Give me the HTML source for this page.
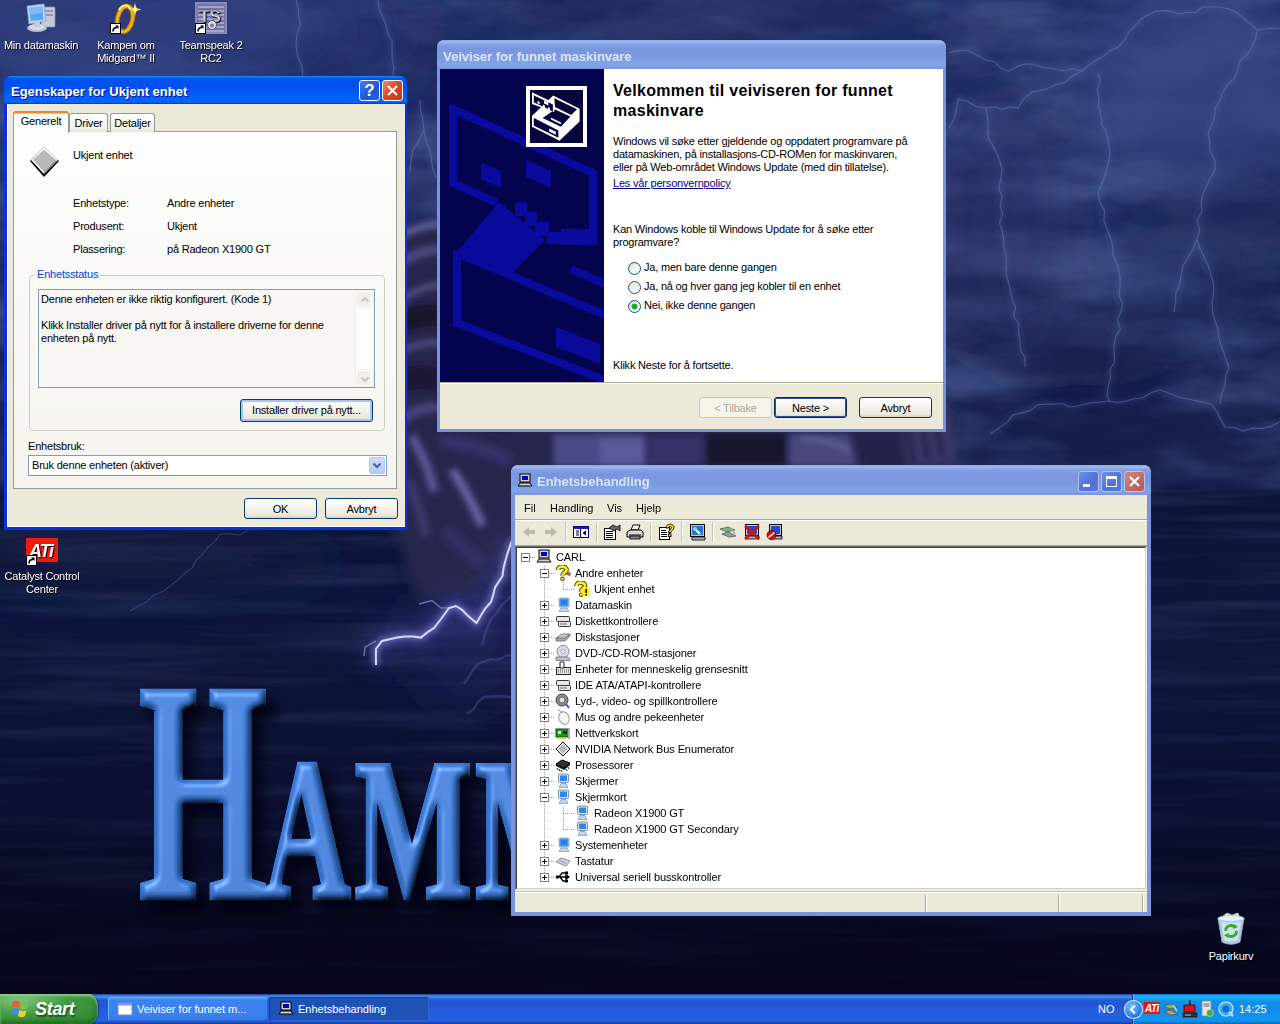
<!DOCTYPE html>
<html lang="no">
<head>
<meta charset="utf-8">
<title>Skrivebord</title>
<style>
*{box-sizing:border-box;margin:0;padding:0}
html,body{width:1280px;height:1024px;overflow:hidden;background:#0a0a28}
body{position:relative;font-family:"Liberation Sans",sans-serif;font-size:11px;color:#000;line-height:13px}
.abs{position:absolute}
#wall{position:absolute;left:0;top:0;width:1280px;height:1024px;overflow:hidden;
 background:linear-gradient(180deg,#1f2c63 0px,#202d64 150px,#1c2759 260px,#182150 350px,#161e49 478px,#0d1438 500px,#0f163b 650px,#0b0f31 800px,#070922 900px,#05061b 1000px)}
/* desktop icons */
.dicon{position:absolute;width:110px;text-align:center;color:#fff;font-size:11px;line-height:13px;text-shadow:1px 1px 1px #000;letter-spacing:-0.2px}
.dicon .lbl{display:block}
/* windows */
.win{position:absolute;background:#ece9d8}
.tb{position:absolute;left:0;top:0;right:0;color:#fff;font-weight:bold;font-size:13px;white-space:nowrap}
.btn{position:absolute;height:23px;border:1px solid #003c74;border-radius:3px;background:linear-gradient(180deg,#fff 0%,#f4f3ee 45%,#ebe8dc 85%,#d6d0c5 100%);text-align:center;line-height:20px;font-size:11px;letter-spacing:-0.2px}
.dlg{letter-spacing:-0.2px}

.tb.act{background:linear-gradient(180deg,#0997ff,#0053ee 8%,#0050ee 40%,#0066ff 88%,#0066ff 93%,#005bff 95%,#003dd7 96%,#003dd7)}
.tb.ina{background:linear-gradient(180deg,#8ea9e8 0,#9db9ee 7%,#82a2e4 16%,#7a96df 30%,#7b99e1 60%,#82a5e8 85%,#7d9de3 94%,#7a93df 100%);color:#d8e4f8}
.cb{position:absolute;width:21px;height:21px;border:1px solid #fff;border-radius:3px;color:#fff;text-align:center;overflow:hidden}
.cb svg{position:absolute;left:-1px;top:-1px}
.cb.help{background:linear-gradient(135deg,#3f7cf0,#1f55d8 60%,#2a62e0);font-size:17px;line-height:19px;font-weight:bold}
.cb.close{background:linear-gradient(135deg,#ee8e6c,#d8452a 50%,#c2351c)}
.ina .cb{border-color:#b4c3ee}
.ina .cb.min,.ina .cb.max{background:linear-gradient(135deg,#6f8fe6,#4f70d8 60%,#5a7be0)}
.ina .cb.close{background:linear-gradient(135deg,#d08a86,#c26660 60%,#b95b58)}
.tab{border:1px solid #919b9c;border-bottom:none;border-radius:3px 3px 0 0;background:linear-gradient(180deg,#fff,#f1f0ea 80%,#e6e4d9);text-align:center;line-height:18px}
.tab.sel{background:#fcfcfa;border-top:2px solid #ffc73c;border-radius:3px 3px 0 0;line-height:17px;border-top-color:#e68b2c;box-shadow:inset 0 1px 0 #ffc73c;height:22px!important}
.btn.def{box-shadow:inset 0 0 0 2px #a6c3f3;}
.sba{width:16px;height:16px;border:1px solid #fff;border-radius:2px;background:#f1f0e8;box-shadow:0 0 0 1px #f0efe8}

.radio{width:13px;height:13px;border-radius:50%;border:1px solid #1d5281;background:linear-gradient(135deg,#dcdcd4 0%,#f4f4f0 50%,#fff 100%)}
.radio.on::after{content:"";position:absolute;left:3px;top:3px;width:5px;height:5px;border-radius:50%;background:#21a121;box-shadow:0 0 0 0.5px #3fc43f}
.btn.dis{color:#aca899;border-color:#c9c7ba;background:#f5f4ea}

.vdot{width:1px;background:repeating-linear-gradient(180deg,#a0a0a0 0 1px,transparent 1px 2px)}
.hdot{height:1px;background:repeating-linear-gradient(90deg,#a0a0a0 0 1px,transparent 1px 2px)}
.tsep{top:0px;width:2px;height:20px;border-left:1px solid #c5c2b8;border-right:1px solid #fff}
.ssep{top:3px;width:2px;height:17px;border-left:1px solid #aca899;border-right:1px solid #fff}

.sc{left:0;bottom:0}

.tkb{border-radius:3px;color:#fff;white-space:nowrap}
</style>
</head>
<body>
<div id="wall">
<!--WALLSTART-->
<svg class="abs" style="left:0;top:0" width="1280" height="1024" viewBox="0 0 1280 1024">
<defs>
 <filter id="b30" x="-50%" y="-50%" width="200%" height="200%"><feGaussianBlur stdDeviation="30"/></filter>
 <filter id="b14" x="-50%" y="-50%" width="200%" height="200%"><feGaussianBlur stdDeviation="14"/></filter>
 <filter id="b6" x="-50%" y="-50%" width="200%" height="200%"><feGaussianBlur stdDeviation="6"/></filter>
 <filter id="b3" x="-20%" y="-20%" width="140%" height="140%"><feGaussianBlur stdDeviation="3"/></filter>
 <filter id="b1" x="-20%" y="-20%" width="140%" height="140%"><feGaussianBlur stdDeviation="0.7"/></filter>
 <filter id="cd" x="0" y="0" width="100%" height="100%"><feTurbulence type="fractalNoise" baseFrequency="0.006 0.02" numOctaves="4" seed="3"/><feColorMatrix type="matrix" values="0 0 0 0 0.05  0 0 0 0 0.08  0 0 0 0 0.24  2.6 0 0 0 -1.05"/></filter>
 <filter id="cw" x="0" y="0" width="100%" height="100%"><feTurbulence type="fractalNoise" baseFrequency="0.007 0.022" numOctaves="4" seed="21"/><feColorMatrix type="matrix" values="0 0 0 0 0.22  0 0 0 0 0.29  0 0 0 0 0.55  0 2.4 0 0 -1.0"/></filter>
 <filter id="sea" x="0" y="0" width="100%" height="100%"><feTurbulence type="fractalNoise" baseFrequency="0.004 0.07" numOctaves="3" seed="8"/><feColorMatrix type="matrix" values="0 0 0 0 0.09  0 0 0 0 0.12  0 0 0 0 0.30  2.2 0 0 0 -0.95"/></filter>
 <filter id="bev" x="-5%" y="-5%" width="110%" height="110%"><feGaussianBlur in="SourceAlpha" stdDeviation="3.5" result="blur"/><feSpecularLighting in="blur" surfaceScale="7" specularConstant="0.9" specularExponent="18" lighting-color="#a8d0ff" result="spec"><feDistantLight azimuth="235" elevation="42"/></feSpecularLighting><feComposite in="spec" in2="SourceAlpha" operator="in" result="specIn"/><feDiffuseLighting in="blur" surfaceScale="7" diffuseConstant="1" lighting-color="#ffffff" result="dif"><feDistantLight azimuth="235" elevation="55"/></feDiffuseLighting><feComposite in="SourceGraphic" in2="dif" operator="arithmetic" k1="1.08" k2="0" k3="0" k4="0" result="shaded"/><feComposite in="shaded" in2="SourceAlpha" operator="in" result="sh2"/><feComposite in="sh2" in2="specIn" operator="arithmetic" k1="0" k2="1" k3="0.6" k4="0"/></filter>
 <linearGradient id="hf" x1="0" y1="0" x2="0" y2="1"><stop offset="0" stop-color="#4486e4"/><stop offset=".5" stop-color="#3e7edc"/><stop offset="1" stop-color="#3876d4"/></linearGradient>
 <linearGradient id="seaf" x1="0" y1="0" x2="0" y2="1"><stop offset="0" stop-color="#fff"/><stop offset=".6" stop-color="#fff" stop-opacity=".6"/><stop offset="1" stop-color="#fff" stop-opacity=".15"/></linearGradient>
 <linearGradient id="skyf" x1="0" y1="0" x2="0" y2="1"><stop offset="0" stop-color="#fff"/><stop offset=".55" stop-color="#fff" stop-opacity=".8"/><stop offset="1" stop-color="#fff" stop-opacity=".15"/></linearGradient>
 <mask id="skym"><rect x="0" y="0" width="1280" height="490" fill="url(#skyf)"/></mask>
 <mask id="seam"><rect x="0" y="490" width="1280" height="510" fill="url(#seaf)"/></mask>
</defs>
<rect width="1280" height="490" filter="url(#cd)" opacity=".8"/>
<g mask="url(#skym)"><rect width="1280" height="490" filter="url(#cw)" opacity=".32"/></g>
<g mask="url(#seam)"><rect y="490" width="1280" height="510" filter="url(#sea)" opacity=".3"/></g>
<!-- cloud patches -->
<g filter="url(#b30)">
 <ellipse cx="1060" cy="115" rx="90" ry="20" fill="#18214f" opacity=".4"/>
 <ellipse cx="1250" cy="215" rx="80" ry="35" fill="#172052" opacity=".5"/>
 <ellipse cx="1080" cy="360" rx="90" ry="28" fill="#141b45" opacity=".5"/>
 <ellipse cx="1200" cy="80" rx="120" ry="90" fill="#384a86" opacity=".75"/>
 <ellipse cx="1170" cy="290" rx="70" ry="35" fill="#2c3a70" opacity=".55"/>
 <ellipse cx="1000" cy="230" rx="60" ry="120" fill="#273469" opacity=".5"/>
 <ellipse cx="140" cy="30" rx="230" ry="60" fill="#2f4080" opacity=".8"/>
 <ellipse cx="370" cy="45" rx="75" ry="45" fill="#17225a" opacity=".6"/>
 <ellipse cx="700" cy="10" rx="260" ry="30" fill="#18224f" opacity=".55"/>
 <ellipse cx="470" cy="640" rx="60" ry="60" fill="#30327a" opacity=".4"/>
 <ellipse cx="150" cy="560" rx="200" ry="40" fill="#18214c" opacity=".5"/>
</g>
<!-- figure -->
<g filter="url(#b6)">
 <path d="M396 236c20-12 40-14 60-8l24 202 450-30 25 20-10 50-60 10H530l-10 60-40 50-60 10-30-80z" fill="#28254e"/>
 <path d="M480 240c100-40 300-40 430 20l30 150-460 20z" fill="#1d1b40"/>
</g>
<g filter="url(#b3)">
 <path d="M400 236c14-8 26-11 40-12" stroke="#7674ac" stroke-width="5" fill="none"/>
 <path d="M402 262c12-8 24-12 38-13" stroke="#4a4880" stroke-width="10" fill="none"/>
 <path d="M402 300c12-10 24-14 38-15" stroke="#5c5a94" stroke-width="5" fill="none"/>
 <path d="M402 322c12-6 24-8 38-6" stroke="#14122c" stroke-width="22" fill="none"/>
 <path d="M402 352c12-8 24-10 38-9" stroke="#504e88" stroke-width="6" fill="none"/>
 <path d="M402 380c12-4 24-4 38 0" stroke="#1a1834" stroke-width="24" fill="none"/>
 <path d="M402 420c12-10 24-14 38-12" stroke="#46447c" stroke-width="10" fill="none"/>
 <path d="M412 436c10 20 18 34 22 56" stroke="#5a5894" stroke-width="9" fill="none"/>
 <path d="M408 480c8 20 14 36 18 56" stroke="#3c3a70" stroke-width="9" fill="none"/>
 <path d="M452 470c12 18 22 36 30 56" stroke="#6664a2" stroke-width="9" fill="none"/>
 <path d="M440 440c20 4 50 8 70 22" stroke="#34326a" stroke-width="14" fill="none"/>
 <path d="M445 530l36 34" stroke="#302e62" stroke-width="16"/>
 <path d="M553 434h92v32h-92z" fill="#4a4886"/>
 <path d="M600 440h45v26h-45z" fill="#5c5a9a"/>
 <path d="M648 436h56v30h-56z" fill="#34326a"/>
 <path d="M706 434h80v32h-80z" fill="#14122e"/>
 <path d="M789 434h60l8 32h-68z" fill="#48467e"/>
 <path d="M800 438c20 0 40 6 50 14" stroke="#6a68a4" stroke-width="3" fill="none"/>
 <path d="M857 434h40l4 32h-40z" fill="#22204a"/>
 <path d="M900 410l48-8 8 60-48 6z" fill="#3a3868"/>
 <path d="M906 418l8 46M920 414l8 46M934 410l8 46" stroke="#17153a" stroke-width="4"/>
</g>
<!-- faint lightning -->
<path d="M1280 28 L1268.5 28.5 L1257.0 30.0 L1250.6 23.9 L1243.8 18.5 L1237.2 12.7 L1229.0 9.0 L1220.1 7.0 L1211.0 7.0 L1202.6 6.9 L1195.4 12.5 L1187.0 12.4 L1179.0 14.0 L1167.8 10.6 L1156.0 11.0 L1142.0 18.0 L1135.5 25.3 L1128.6 32.2 L1124.0 41.0 L1118.0 47.2 L1110.1 50.6 L1103.6 56.2 L1096.0 60.0 L1088.9 65.3 L1082.0 71.0 L1072.9 75.4 L1065.0 82.2 L1055.0 85.0 L1047.7 88.5 L1039.9 90.6 L1032.0 92.0 L1023.6 98.8 L1018.0 108.0 L1010.0 106.8 L1002.0 109.5 L994.0 106.7 L986.0 108.0 L976.2 106.5 L967.5 101.5 L958.0 99.0 L956.6 109.2 L954.1 119.0 L949.0 128.0 M1082 71 L1073.1 68.7 L1063.9 70.9 L1055.0 69.0 L1043.2 67.7 L1032.0 64.0 L1023.7 64.3 L1016.2 67.1 L1009.0 71.0 L1000.9 68.2 L994.5 61.8 L986.0 60.0 L976.6 54.8 L967.0 50.0 L957.9 50.7 L949.0 53.0 M1098 73 L1099.9 81.3 L1097.3 89.9 L1099.0 98.3 L1098.4 106.7 L1101.0 115.0 L1101.6 124.4 L1106.4 132.8 L1108.3 141.9 L1110.0 151.0 L1109.0 159.8 L1106.7 168.2 L1104.6 176.7 L1101.2 184.8 L1098.0 193.0 L1099.8 202.1 L1104.6 210.5 L1104.0 220.2 L1107.0 229.0 L1110.1 237.2 L1112.6 245.6 L1112.9 254.6 L1116.7 262.6 L1119.0 271.0 L1120.2 279.2 L1119.9 287.4 L1119.3 295.6 L1122.5 303.7 L1121.0 312.0 L1117.5 319.8 L1120.3 328.8 L1115.7 336.4 L1113.9 344.5 L1114.0 353.0 L1114.7 361.7 L1110.0 369.6 L1110.4 378.3 L1108.1 386.5 L1107.0 395.0 L1110.0 402.0 M1257 32 L1255.1 40.4 L1251.2 47.7 L1246.8 54.8 L1240.0 60.7 L1238.0 69.0 L1234.7 77.7 L1228.0 84.4 L1222.9 92.1 L1220.0 101.0 L1215.2 108.3 L1214.6 117.2 L1211.6 125.2 L1208.0 133.0 L1209.6 142.3 L1210.3 151.7 L1214.9 160.4 L1215.0 170.0 L1210.5 177.6 L1206.8 185.5 L1203.1 193.4 L1201.0 202.0 L1202.0 211.5 L1197.0 220.3 L1199.8 229.9 L1197.0 239.0 L1193.6 248.3 L1188.6 256.8 L1183.3 265.3 L1181.0 275.0 L1179.9 284.4 L1175.7 293.2 L1175.6 302.7 L1174.0 312.0 M986 108 L987.5 117.9 L988.1 127.9 L988.0 138.0 L992.8 145.4 L996.7 153.3 L999.9 161.4 L1002.0 170.0 L1000.7 179.0 L998.8 187.9 L1002.0 197.1 L1000.0 206.0 L1002.8 214.2 L999.5 223.0 L1002.3 231.2 L1003.6 239.6 L1004.0 248.0 L1006.4 256.8 L1006.1 266.1 L1006.3 275.2 L1009.0 284.0 L1010.8 292.0 L1012.5 299.9 L1015.6 307.6 L1013.5 316.4 L1018.9 323.6 L1018.5 332.0 L1020.0 340.0 L1020.2 349.3 L1024.9 357.7 L1025.0 367.0 M990 434 L998.3 428.5 L1006.6 422.9 L1013.0 415.0 L1021.4 412.8 L1029.9 410.7 L1037.2 405.1 L1046.0 404.0 L1054.0 404.2 L1062.1 403.5 L1069.9 407.0 L1078.0 406.0 L1089.3 403.1 L1101.0 402.0 L1109.0 401.0 L1117.2 402.7 L1125.1 401.3 L1133.0 399.0 L1142.7 398.0 L1150.9 392.8 L1160.0 390.0 L1169.3 393.0 L1178.4 397.0 L1188.0 399.0 L1199.5 401.4 L1211.0 404.0 L1216.5 411.2 L1220.7 419.1 L1225.0 427.0 L1234.3 427.5 L1243.0 431.0 L1252.1 428.2 L1262.0 428.6 L1271.2 426.2 L1280.0 422.0 M1197 239 L1200.0 248.2 L1204.0 257.0 L1208.2 265.7 L1211.0 275.0 L1213.6 284.0 L1213.6 293.3 L1212.2 302.7 L1212.6 311.9 L1215.0 321.0 L1217.9 328.5 L1218.5 336.7 L1220.8 344.4 L1223.5 351.9 L1226.0 359.5 L1229.0 367.0 L1225.6 376.0 L1225.1 385.6 L1221.4 394.5 L1220.0 404.0 M296 0 L298.3 8.2 L298.7 16.7 L300.0 25.0 L296.8 34.8 L296.0 45.0 L297.5 55.5 L301.6 65.5 L303.0 76.0 M378 0 L378.8 8.9 L382.7 16.9 L386.0 25.0 L387.7 33.4 L392.1 41.2 L392.0 50.0 L392.1 58.7 L393.8 67.3 L393.0 76.0 M420 100 L420.6 110.1 L422.8 120.0 L424.0 130.0 L425.7 140.4 L430.0 150.0 L431.4 159.5 L432.7 168.9 L436.0 178.0 M424 130 L419.1 140.3 L413.0 150.0 L410.9 160.9 L410.0 172.0" stroke="#6d80c0" stroke-width="3.5" fill="none" opacity=".28" filter="url(#b3)"/>
<path d="M1280 28 L1268.5 28.5 L1257.0 30.0 L1250.6 23.9 L1243.8 18.5 L1237.2 12.7 L1229.0 9.0 L1220.1 7.0 L1211.0 7.0 L1202.6 6.9 L1195.4 12.5 L1187.0 12.4 L1179.0 14.0 L1167.8 10.6 L1156.0 11.0 L1142.0 18.0 L1135.5 25.3 L1128.6 32.2 L1124.0 41.0 L1118.0 47.2 L1110.1 50.6 L1103.6 56.2 L1096.0 60.0 L1088.9 65.3 L1082.0 71.0 L1072.9 75.4 L1065.0 82.2 L1055.0 85.0 L1047.7 88.5 L1039.9 90.6 L1032.0 92.0 L1023.6 98.8 L1018.0 108.0 L1010.0 106.8 L1002.0 109.5 L994.0 106.7 L986.0 108.0 L976.2 106.5 L967.5 101.5 L958.0 99.0 L956.6 109.2 L954.1 119.0 L949.0 128.0 M1082 71 L1073.1 68.7 L1063.9 70.9 L1055.0 69.0 L1043.2 67.7 L1032.0 64.0 L1023.7 64.3 L1016.2 67.1 L1009.0 71.0 L1000.9 68.2 L994.5 61.8 L986.0 60.0 L976.6 54.8 L967.0 50.0 L957.9 50.7 L949.0 53.0 M1098 73 L1099.9 81.3 L1097.3 89.9 L1099.0 98.3 L1098.4 106.7 L1101.0 115.0 L1101.6 124.4 L1106.4 132.8 L1108.3 141.9 L1110.0 151.0 L1109.0 159.8 L1106.7 168.2 L1104.6 176.7 L1101.2 184.8 L1098.0 193.0 L1099.8 202.1 L1104.6 210.5 L1104.0 220.2 L1107.0 229.0 L1110.1 237.2 L1112.6 245.6 L1112.9 254.6 L1116.7 262.6 L1119.0 271.0 L1120.2 279.2 L1119.9 287.4 L1119.3 295.6 L1122.5 303.7 L1121.0 312.0 L1117.5 319.8 L1120.3 328.8 L1115.7 336.4 L1113.9 344.5 L1114.0 353.0 L1114.7 361.7 L1110.0 369.6 L1110.4 378.3 L1108.1 386.5 L1107.0 395.0 L1110.0 402.0 M1257 32 L1255.1 40.4 L1251.2 47.7 L1246.8 54.8 L1240.0 60.7 L1238.0 69.0 L1234.7 77.7 L1228.0 84.4 L1222.9 92.1 L1220.0 101.0 L1215.2 108.3 L1214.6 117.2 L1211.6 125.2 L1208.0 133.0 L1209.6 142.3 L1210.3 151.7 L1214.9 160.4 L1215.0 170.0 L1210.5 177.6 L1206.8 185.5 L1203.1 193.4 L1201.0 202.0 L1202.0 211.5 L1197.0 220.3 L1199.8 229.9 L1197.0 239.0 L1193.6 248.3 L1188.6 256.8 L1183.3 265.3 L1181.0 275.0 L1179.9 284.4 L1175.7 293.2 L1175.6 302.7 L1174.0 312.0 M986 108 L987.5 117.9 L988.1 127.9 L988.0 138.0 L992.8 145.4 L996.7 153.3 L999.9 161.4 L1002.0 170.0 L1000.7 179.0 L998.8 187.9 L1002.0 197.1 L1000.0 206.0 L1002.8 214.2 L999.5 223.0 L1002.3 231.2 L1003.6 239.6 L1004.0 248.0 L1006.4 256.8 L1006.1 266.1 L1006.3 275.2 L1009.0 284.0 L1010.8 292.0 L1012.5 299.9 L1015.6 307.6 L1013.5 316.4 L1018.9 323.6 L1018.5 332.0 L1020.0 340.0 L1020.2 349.3 L1024.9 357.7 L1025.0 367.0 M990 434 L998.3 428.5 L1006.6 422.9 L1013.0 415.0 L1021.4 412.8 L1029.9 410.7 L1037.2 405.1 L1046.0 404.0 L1054.0 404.2 L1062.1 403.5 L1069.9 407.0 L1078.0 406.0 L1089.3 403.1 L1101.0 402.0 L1109.0 401.0 L1117.2 402.7 L1125.1 401.3 L1133.0 399.0 L1142.7 398.0 L1150.9 392.8 L1160.0 390.0 L1169.3 393.0 L1178.4 397.0 L1188.0 399.0 L1199.5 401.4 L1211.0 404.0 L1216.5 411.2 L1220.7 419.1 L1225.0 427.0 L1234.3 427.5 L1243.0 431.0 L1252.1 428.2 L1262.0 428.6 L1271.2 426.2 L1280.0 422.0 M1197 239 L1200.0 248.2 L1204.0 257.0 L1208.2 265.7 L1211.0 275.0 L1213.6 284.0 L1213.6 293.3 L1212.2 302.7 L1212.6 311.9 L1215.0 321.0 L1217.9 328.5 L1218.5 336.7 L1220.8 344.4 L1223.5 351.9 L1226.0 359.5 L1229.0 367.0 L1225.6 376.0 L1225.1 385.6 L1221.4 394.5 L1220.0 404.0 M296 0 L298.3 8.2 L298.7 16.7 L300.0 25.0 L296.8 34.8 L296.0 45.0 L297.5 55.5 L301.6 65.5 L303.0 76.0 M378 0 L378.8 8.9 L382.7 16.9 L386.0 25.0 L387.7 33.4 L392.1 41.2 L392.0 50.0 L392.1 58.7 L393.8 67.3 L393.0 76.0 M420 100 L420.6 110.1 L422.8 120.0 L424.0 130.0 L425.7 140.4 L430.0 150.0 L431.4 159.5 L432.7 168.9 L436.0 178.0 M424 130 L419.1 140.3 L413.0 150.0 L410.9 160.9 L410.0 172.0" stroke="#6f83c2" stroke-width="1.2" fill="none" opacity=".42" filter="url(#b1)"/>
<path d="M262 520 L255.4 526.1 L247.5 530.2 L240.0 535.0 L230.0 533.9 L220.0 534.0 L215.2 541.4 L208.1 546.9 L203.0 554.0 L196.6 559.9 L192.3 567.8 L185.1 572.8 L179.0 579.0 L171.3 585.3 L163.3 591.2 L154.0 595.0 L146.8 601.6 L138.4 606.3 L130.0 611.0" stroke="#5a68a8" stroke-width="1.2" fill="none" opacity=".4" filter="url(#b1)"/>
<!-- bright lightning -->
<path d="M512 540 L508.0 552.0 L505.6 559.9 L503.6 567.8 L502.5 576.0 L495.0 587.5 L493.3 594.8 L491.0 602.0 L484.8 609.0 L480.0 617.0 L476.5 623.0 L467.0 615.0 L462.1 609.8 L456.0 606.0 L449.0 608.0 L441.0 619.0 L434.0 628.0 L427.2 632.4 L421.0 637.6 L413.0 636.5 L405.0 636.5 L397.0 637.6 L389.5 639.3 L382.0 641.0 L376.0 649.0 L375.9 657.0 L376.0 665.0" stroke="#5a5cc8" stroke-width="22" fill="none" opacity=".35" filter="url(#b14)"/>
<path d="M512 540 L508.0 552.0 L505.6 559.9 L503.6 567.8 L502.5 576.0 L495.0 587.5 L493.3 594.8 L491.0 602.0 L484.8 609.0 L480.0 617.0 L476.5 623.0 L467.0 615.0 L462.1 609.8 L456.0 606.0 L449.0 608.0 L441.0 619.0 L434.0 628.0 L427.2 632.4 L421.0 637.6 L413.0 636.5 L405.0 636.5 L397.0 637.6 L389.5 639.3 L382.0 641.0 L376.0 649.0 L375.9 657.0 L376.0 665.0" stroke="#8a8ae8" stroke-width="7" fill="none" opacity=".6" filter="url(#b3)"/>
<path d="M512 596 L506.0 601.1 L500.5 606.6 L496.3 613.3 L491.0 619.0 L487.5 627.5 L484.4 636.1 L482.0 645.0 M512 655 L505.0 656.1 L498.6 659.4 L491.4 659.3 L484.7 661.6 L478.0 663.6 L472.8 670.1 L468.6 677.3 L463.6 684.0 M512 697 L505.0 696.6 L498.0 696.2 L491.0 696.6 L484.0 697.0 L477.9 702.1 L473.7 709.1 L467.0 713.7" stroke="#6868b8" stroke-width="2.5" fill="none" opacity=".3" filter="url(#b1)"/>
<path d="M456 606 L448.6 607.8 L441.0 608.0 L432.0 600.5 L419.0 604.0 M376 641 L365.0 647.0 L364.0 656.0" stroke="#a0a0e0" stroke-width="1.5" fill="none" opacity=".6" filter="url(#b1)"/>
<path d="M512 540 L508.0 552.0 L505.6 559.9 L503.6 567.8 L502.5 576.0 L495.0 587.5 L493.3 594.8 L491.0 602.0 L484.8 609.0 L480.0 617.0 L476.5 623.0 L467.0 615.0 L462.1 609.8 L456.0 606.0 L449.0 608.0 L441.0 619.0 L434.0 628.0 L427.2 632.4 L421.0 637.6 L413.0 636.5 L405.0 636.5 L397.0 637.6 L389.5 639.3 L382.0 641.0 L376.0 649.0 L375.9 657.0 L376.0 665.0" stroke="#e0e0ff" stroke-width="2" fill="none" opacity=".95" filter="url(#b1)"/>
<!-- HAMM -->
<g font-family="Liberation Serif, serif" font-weight="bold" id="hamm">
 <g filter="url(#b6)" fill="#02020c" stroke="#02020c" stroke-width="8" opacity=".8" transform="translate(9 11)"><text x="203" y="897" text-anchor="middle" transform="translate(203 0) scale(.525 1) translate(-203 0)" font-size="313">H</text><text x="307" y="897" text-anchor="middle" transform="translate(307 0) scale(.60 1) translate(-307 0)" font-size="199">A</text><text x="413.5" y="897" text-anchor="middle" transform="translate(413.5 0) scale(.62 1) translate(-413.5 0)" font-size="199">M</text><text x="534" y="897" text-anchor="middle" transform="translate(534 0) scale(.62 1) translate(-534 0)" font-size="199">M</text></g>
 <g fill="url(#hf)" stroke="#3e7edc" stroke-width="7" stroke-linejoin="miter" filter="url(#bev)"><text x="203" y="897" text-anchor="middle" transform="translate(203 0) scale(.525 1) translate(-203 0)" font-size="313">H</text><text x="307" y="897" text-anchor="middle" transform="translate(307 0) scale(.60 1) translate(-307 0)" font-size="199">A</text><text x="413.5" y="897" text-anchor="middle" transform="translate(413.5 0) scale(.62 1) translate(-413.5 0)" font-size="199">M</text><text x="534" y="897" text-anchor="middle" transform="translate(534 0) scale(.62 1) translate(-534 0)" font-size="199">M</text></g>
</g>
</svg>
<!--WALLEND-->

</div>
<div class="dicon" style="left:-14px;top:2px">
 <svg width="34" height="32" viewBox="0 0 34 32" style="display:block;margin:0 auto"><rect x="17" y="5" width="14" height="20" rx="1" fill="#c4cad8" stroke="#8890a8" stroke-width=".8"/><rect x="19" y="8" width="10" height="2" fill="#9098b0"/><rect x="19" y="12" width="10" height="2" fill="#9098b0"/><path d="M3 4l17-2 2 17-17 3z" fill="#b8d4f4" stroke="#8aa8d0" stroke-width=".8"/><path d="M5 6l13-1.500 1.500 13L7 19z" fill="#5aa6f0"/><path d="M5 6l13-1.500.7 6L6 13z" fill="#7abaf8"/><ellipse cx="13" cy="26" rx="10" ry="4" fill="#b4bcd0"/><ellipse cx="13" cy="25" rx="8" ry="3" fill="#d4daea"/><path d="M10 20h6v5h-6z" fill="#c0c8dc"/></svg>
 <span class="lbl" style="margin-top:5px">Min datamaskin</span></div>
<div class="dicon" style="left:71px;top:2px">
 <div style="position:relative;width:32px;height:32px;margin:0 auto"><svg width="32" height="32" viewBox="0 0 32 32"><ellipse cx="15" cy="17" rx="7.500" ry="13" fill="none" stroke="#b87608" stroke-width="5" transform="rotate(12 15 17)"/><ellipse cx="15" cy="17" rx="7.500" ry="13" fill="none" stroke="#f0b818" stroke-width="2.500" transform="rotate(12 15 17)"/><path d="M9 8c3-6 9-6 11-1" stroke="#fff08a" stroke-width="2" fill="none"/><path d="M25 1l1.500 5 5 1.500-5 1.500-1.500 5-1.500-5-5-1.500 5-1.500z" fill="#ffd84a"/><circle cx="25" cy="7.500" r="2" fill="#fff8c8"/></svg><svg class="abs sc" width="11" height="11" viewBox="0 0 11 11"><rect width="11" height="11" fill="#fff"/><rect x=".5" y=".5" width="10" height="10" fill="#fff" stroke="#000" stroke-width="1"/><path d="M3 8.500c0-3 1.500-4 4-4" stroke="#000" stroke-width="1.600" fill="none"/><path d="M5 2.500h3.500V6z" fill="#000"/></svg></div>
 <span class="lbl" style="margin-top:5px">Kampen om<br>Midgard™ II</span></div>
<div class="dicon" style="left:156px;top:2px">
 <div style="position:relative;width:32px;height:32px;margin:0 auto"><svg width="32" height="32" viewBox="0 0 32 32"><rect width="32" height="32" fill="#8888b8"/><rect x="2" y="2" width="28" height="28" fill="#7474a8"/><path d="M3 5h26M3 9h26M3 13h26M3 17h26M3 21h26M3 25h26M3 29h26" stroke="#a4a4cc" stroke-width="2"/><text x="4" y="20" font-family="Liberation Sans, sans-serif" font-weight="bold" font-size="17" fill="#f4f4fc" stroke="#50507c" stroke-width=".3">TS</text><circle cx="17" cy="23" r="4.500" fill="#e0e0ec" stroke="#50507c"/><circle cx="17" cy="23.500" r="2" fill="#7474a8"/></svg><svg class="abs sc" width="11" height="11" viewBox="0 0 11 11"><rect width="11" height="11" fill="#fff"/><rect x=".5" y=".5" width="10" height="10" fill="#fff" stroke="#000" stroke-width="1"/><path d="M3 8.500c0-3 1.500-4 4-4" stroke="#000" stroke-width="1.600" fill="none"/><path d="M5 2.500h3.500V6z" fill="#000"/></svg></div>
 <span class="lbl" style="margin-top:5px">Teamspeak 2<br>RC2</span></div>
<div class="dicon" style="left:-13px;top:534px">
 <div style="position:relative;width:32px;height:32px;margin:0 auto"><svg width="32" height="32" viewBox="0 0 32 32"><rect x="0" y="4" width="32" height="24" fill="#ee1c0c"/><text x="3" y="23" font-family="Liberation Sans, sans-serif" font-weight="bold" font-style="italic" font-size="18" fill="#fff" letter-spacing="-1.200">ATi</text></svg><svg class="abs sc" width="11" height="11" viewBox="0 0 11 11"><rect width="11" height="11" fill="#fff"/><rect x=".5" y=".5" width="10" height="10" fill="#fff" stroke="#000" stroke-width="1"/><path d="M3 8.500c0-3 1.500-4 4-4" stroke="#000" stroke-width="1.600" fill="none"/><path d="M5 2.500h3.500V6z" fill="#000"/></svg></div>
 <span class="lbl" style="margin-top:4px">Catalyst Control<br>Center</span></div>
<div class="dicon" style="left:1176px;top:911px">
 <svg width="32" height="34" viewBox="0 0 32 34" style="display:block;margin:0 auto"><path d="M8 5l4-3 5 2 6-2 2 5z" fill="#f4f0d8" stroke="#c8c8b0" stroke-width=".6"/><path d="M3 7c8 3 18 3 26 0l-4 24c-6 3-12 3-18 0z" fill="#c4dcf0" fill-opacity=".9" stroke="#9ab8d8" stroke-width=".8"/><ellipse cx="16" cy="7.500" rx="13" ry="3" fill="#e4f0fa" stroke="#a8c4e0" stroke-width=".8"/><path d="M6 10c6 2 14 2 20 0l-3 19c-5 2-9 2-14 0z" fill="#dcecf8" fill-opacity=".7"/><circle cx="16" cy="20" r="5.500" fill="none" stroke="#2fb02f" stroke-width="3" stroke-dasharray="12 5"/><path d="M19 13l4 3-5 2zM13 27l-4-3 5-2z" fill="#2fb02f"/></svg>
 <span class="lbl" style="margin-top:5px">Papirkurv</span></div>

<div class="win" id="w1" style="left:4px;top:76px;width:403px;height:454px;background:#0831d9;border-radius:7px 7px 0 0">
 <div class="tb act" style="height:28px;border-radius:7px 7px 0 0"><span class="abs" style="left:7px;top:8px;line-height:16px;text-shadow:1px 1px 0 #0f1089">Egenskaper for Ukjent enhet</span>
  <div class="cb help" style="left:355px;top:4px">?</div>
  <div class="cb close" style="left:378px;top:4px"><svg width="21" height="21" viewBox="0 0 21 21"><path d="M6 6l9 9M15 6l-9 9" stroke="#fff" stroke-width="2.2" fill="none"/></svg></div>
 </div>
 <div class="abs dlg" style="left:3px;top:28px;width:398px;height:423px;background:#ece9d8;border-left:1px solid #fff;border-bottom:1px solid #fff">
  <!-- tab page -->
  <div class="abs" style="left:5px;top:27px;width:384px;height:358px;border:1px solid #919b9c;background:linear-gradient(180deg,#fdfdfb,#f5f4ef)"></div>
  <div class="abs tab" style="left:61px;top:9px;width:39px;height:19px">Driver</div>
  <div class="abs tab" style="left:102px;top:9px;width:45px;height:19px">Detaljer</div>
  <div class="abs tab sel" style="left:5px;top:7px;width:56px;height:21px">Generelt</div>
  <svg class="abs" style="left:20px;top:42px" width="32" height="32" viewBox="0 0 32 32"><path d="M2 15L16 1l15 14-15 16z" fill="#000"/><path d="M3 14L16 1l14 13-14 14z" fill="#fff"/><path d="M5 14L16 3.5 28 14 16 26z" fill="#b9b9b9"/><path d="M16 26l12-12 1 1-13 13z" fill="#808080"/></svg>
  <span class="abs" style="left:65px;top:45px">Ukjent enhet</span>
  <span class="abs" style="left:65px;top:93px">Enhetstype:</span><span class="abs" style="left:159px;top:93px">Andre enheter</span>
  <span class="abs" style="left:65px;top:116px">Produsent:</span><span class="abs" style="left:159px;top:116px">Ukjent</span>
  <span class="abs" style="left:65px;top:139px">Plassering:</span><span class="abs" style="left:159px;top:139px">på Radeon X1900 GT</span>
  <!-- group -->
  <div class="abs" style="left:21px;top:171px;width:356px;height:156px;border:1px solid #d0d0bf;border-radius:4px"></div>
  <span class="abs" style="left:27px;top:164px;padding:0 2px;background:#f9f9f6;color:#0046d5">Enhetsstatus</span>
  <div class="abs" style="left:30px;top:185px;width:337px;height:99px;border:1px solid #7f9db9;background:#f7f6f2">
   <div class="abs" style="left:2px;top:3px;width:310px;white-space:nowrap">Denne enheten er ikke riktig konfigurert. (Kode 1)<br><br>Klikk Installer driver på nytt for å installere driverne for denne<br>enheten på nytt.</div>
   <div class="abs" style="right:2px;top:1px;width:17px;height:95px;background:#fcfcf9;border-left:1px solid #f1f0ea">
     <div class="abs sba" style="left:0;top:0"><svg width="16" height="16"><path d="M4.5 9.5L8 6l3.5 3.5" stroke="#c9c7ba" stroke-width="2" fill="none"/></svg></div>
     <div class="abs sba" style="left:0;bottom:0"><svg width="16" height="16"><path d="M4.5 6.5L8 10l3.5-3.5" stroke="#c9c7ba" stroke-width="2" fill="none"/></svg></div>
   </div>
  </div>
  <div class="btn def" style="left:232px;top:295px;width:133px;height:23px">Installer driver på nytt...</div>
  <span class="abs" style="left:20px;top:336px">Enhetsbruk:</span>
  <div class="abs" style="left:20px;top:351px;width:359px;height:21px;border:1px solid #7f9db9;background:#fff"><span class="abs" style="left:3px;top:3px">Bruk denne enheten (aktiver)</span>
   <div class="abs" style="right:1px;top:1px;width:16px;height:17px;border-radius:2px;background:linear-gradient(180deg,#cfdcfd,#b7c9f7);border:1px solid #b4c8f6"><svg width="14" height="15" viewBox="0 0 14 15"><path d="M3.5 5.5L7 9l3.5-3.5" stroke="#4d6185" stroke-width="2" fill="none"/></svg></div>
  </div>
  <div class="btn" style="left:236px;top:394px;width:73px;height:21px">OK</div>
  <div class="btn" style="left:317px;top:394px;width:73px;height:21px">Avbryt</div>
 </div>
</div>

<div class="win ina" id="w2" style="left:437px;top:40px;width:509px;height:392px;background:#7b92de;border-radius:7px 7px 0 0">
 <div class="tb ina" style="height:29px;border-radius:7px 7px 0 0"><span class="abs" style="left:6px;top:9px;line-height:16px">Veiviser for funnet maskinvare</span></div>
 <div class="abs dlg" style="left:3px;top:29px;width:503px;height:360px;background:#ece9d8">
  <div class="abs" style="left:0;top:0;width:503px;height:313px;background:#fff"></div>
  <div class="abs" id="wm" style="left:0;top:0;width:164px;height:313px;background:#04044e;overflow:hidden">
   <svg class="abs" style="left:0;top:0" width="164" height="313" viewBox="0 0 164 313">
    <g fill="none" stroke="#0a0a9c" stroke-width="8" stroke-linejoin="miter">
     <path d="M57 134L13 114V40l140 64v72"/>
     <path d="M17 184l150 63M17 182v72l150 58M131 200l36 16"/>
    </g>
    <g fill="#0a0a9c">
     <path d="M17 183l42-50 46 38-34 34z"/>
     <path d="M41 93l20 9v17l-20-9zM86 91l25 11v17l-25-11z"/>
     <path d="M75 133h12v10h10v10h12v10h12v12h-14v-8h-12v-10H85v-10H75z"/>
     <path d="M116 258l44 17v20l-44-17z"/>
     <path d="M121 160h36v16h-36z"/>
    </g>
   </svg>
   <div class="abs" style="left:86px;top:17px;width:61px;height:61px;background:#fff"></div>
   <svg class="abs" style="left:90px;top:21px" width="53" height="53" viewBox="0 0 53 53"><rect width="53" height="53" fill="#06063c"/>
    <path d="M2 25.800L23.200 5.600l26.400 13.200v12.800L29.500 50.700 2 36.800z" fill="#fff"/>
    <path d="M3.800 28l24.600 12.400v7.400L3.800 35.700z" fill="#06063c"/><path d="M19.200 38.600l6.600 3.200v3l-6.600-3.200z" fill="#fff"/>
    <path d="M24.300 8.200L47 19.200 41.200 25 25 17z" fill="#06063c"/>
    <path d="M25 19.500l15.400 7-9.500 10.300L12.600 28z" fill="#06063c"/><path d="M21 28.500l10 5" stroke="#fff" stroke-width="1.600"/>
    <path d="M2 2.300l22.300 10.700v9.100L2 14z" fill="#fff"/><path d="M3.800 5.300l19.100 9.100v7l-3-1.500v-2l-2-1v2l-3-1.500v-2l-2-1v2L3.800 12.400z" fill="#06063c"/>
    <path d="M7.500 11l2.200 1v2.200l-2.200-1zM14 10.500l4.400 2v3l-4.400-2z" fill="#fff"/>
   </svg>
  </div>
  <div class="abs" style="left:173px;top:12px;font-weight:bold;font-size:16px;line-height:20px;letter-spacing:0.3px;white-space:nowrap">Velkommen til veiviseren for funnet<br>maskinvare</div>
  <div class="abs" style="left:173px;top:66px;white-space:nowrap">Windows vil søke etter gjeldende og oppdatert programvare på<br>datamaskinen, på installasjons-CD-ROMen for maskinvaren,<br>eller på Web-området Windows Update (med din tillatelse).</div>
  <span class="abs" style="left:173px;top:108px;color:#00008b;text-decoration:underline">Les vår personvernpolicy</span>
  <div class="abs" style="left:173px;top:154px;white-space:nowrap">Kan Windows koble til Windows Update for å søke etter<br>programvare?</div>
  <div class="abs radio" style="left:188px;top:193px"></div><span class="abs" style="left:204px;top:192px">Ja, men bare denne gangen</span>
  <div class="abs radio" style="left:188px;top:212px"></div><span class="abs" style="left:204px;top:211px">Ja, nå og hver gang jeg kobler til en enhet</span>
  <div class="abs radio on" style="left:188px;top:231px"></div><span class="abs" style="left:204px;top:230px">Nei, ikke denne gangen</span>
  <span class="abs" style="left:173px;top:290px">Klikk Neste for å fortsette.</span>
  <div class="abs" style="left:0;top:313px;width:503px;height:2px;border-top:1px solid #aca899;border-bottom:1px solid #fff"></div>
  <div class="btn dis" style="left:259px;top:328px;width:73px;height:21px">&lt; Tilbake</div>
  <div class="btn" style="left:334px;top:328px;width:73px;height:21px;border-color:#0a246a;box-shadow:inset 0 0 0 1px #2f4f9a">Neste &gt;</div>
  <div class="btn" style="left:419px;top:328px;width:73px;height:21px">Avbryt</div>
 </div>
</div>

<div class="win ina" id="w3" style="left:511px;top:465px;width:640px;height:451px;background:#7b92de;border-radius:7px 7px 0 0">
 <div class="tb ina" style="height:30px;border-radius:7px 7px 0 0">
  <svg class="abs" style="left:6px;top:8px" width="16" height="16" viewBox="0 0 16 16"><rect x="3" y="1" width="10" height="8" fill="#d4d0c8" stroke="#000" stroke-width="1"/><rect x="5" y="3" width="6" height="4" fill="#0000d0"/><path d="M1 13l2-3h10l2 3z" fill="#d4d0c8" stroke="#000" stroke-width="1"/></svg>
  <span class="abs" style="left:26px;top:9px;line-height:16px">Enhetsbehandling</span>
  <div class="cb min" style="left:567px;top:6px"><svg width="21" height="21"><rect x="5" y="13" width="7" height="3" fill="#fff"/></svg></div>
  <div class="cb max" style="left:590px;top:6px"><svg width="21" height="21"><rect x="5.500" y="6.500" width="10" height="9" fill="none" stroke="#fff"/><rect x="5" y="5" width="11" height="3" fill="#fff"/></svg></div>
  <div class="cb close" style="left:613px;top:6px"><svg width="21" height="21" viewBox="0 0 21 21"><path d="M6 6l9 9M15 6l-9 9" stroke="#fff" stroke-width="2.200" fill="none"/></svg></div>
 </div>
 <div class="abs" style="left:4px;top:30px;width:632px;height:417px;background:#ece9d8">
  <div class="abs" style="left:0;top:0;width:632px;height:25px;border-bottom:1px solid #aca899;box-shadow:0 1px 0 #fff">
   <span class="abs" style="left:9px;top:7px">Fil</span><span class="abs" style="left:35px;top:7px">Handling</span><span class="abs" style="left:92px;top:7px">Vis</span><span class="abs" style="left:121px;top:7px">Hjelp</span>
  </div>
  <div class="abs" id="tbar" style="left:0;top:27px;width:632px;height:24px;border-bottom:1px solid #aca899">
<svg class="abs" style="left:6px;top:2px" width="16" height="16"><path d="M2 8l6-5v3h6v4H8v3z" fill="#bdbaa9"/></svg>
<svg class="abs" style="left:28px;top:2px" width="16" height="16"><path d="M14 8L8 3v3H2v4h6v3z" fill="#bdbaa9"/></svg>
<div class="abs tsep" style="left:50px"></div>
<svg class="abs" style="left:58px;top:2px" width="16" height="16"><rect x=".5" y="2.500" width="15" height="11" fill="#fff" stroke="#00007a"/><rect x="1" y="3" width="14" height="2" fill="#1a1ab0"/><path d="M3 7h3M3 9h3M3 11h3" stroke="#000"/><path d="M7.500 5v8" stroke="#00007a"/><path d="M13 6.500v5l-3.500-2.500z" fill="#000"/></svg>
<div class="abs tsep" style="left:81px"></div>
<svg class="abs" style="left:88px;top:1px" width="18" height="18"><rect x="1.500" y="5.500" width="11" height="11" fill="#fff" stroke="#000"/><path d="M3 8.500h7M3 10.500h7M3 12.500h7M3 14.500h7" stroke="#000"/><path d="M6 5l4-3 4 2 3-2v6l-3-2-3 2z" fill="#666" stroke="#000" stroke-width=".8"/></svg>
<svg class="abs" style="left:111px;top:1px" width="18" height="18"><path d="M5 7l2-5h7l-2 5z" fill="#fff" stroke="#000"/><path d="M1 9l3-2h11l2 2v5H1z" fill="#d8d8d8" stroke="#000"/><path d="M3 12h12" stroke="#000"/><rect x="4" y="13" width="10" height="3" fill="#888" stroke="#000" stroke-width=".8"/></svg>
<div class="abs tsep" style="left:135px"></div>
<svg class="abs" style="left:143px;top:1px" width="18" height="18"><rect x="1.500" y="4.500" width="10" height="12" fill="#fff" stroke="#000"/><path d="M3 7.500h5M3 9.500h6M3 11.500h6M3 13.500h6" stroke="#000"/><path d="M8 5c0-5 8-5 8-.5 0 3-3 3-3 5h-2.500c0-3 3-3 3-5 0-1.500-3-1.500-3 .5z" fill="#ffe600" stroke="#000" stroke-width=".9"/><rect x="10.500" y="11" width="2.500" height="2.500" fill="#ffe600" stroke="#000" stroke-width=".9"/></svg>
<div class="abs tsep" style="left:166px"></div>
<svg class="abs" style="left:174px;top:1px" width="18" height="18"><rect x="1.500" y="1.500" width="14" height="12" fill="#c8c8c8" stroke="#000"/><rect x="3" y="3" width="11" height="9" fill="#1c7ad8"/><path d="M5 5l6 6" stroke="#fff" stroke-width="2"/><circle cx="6" cy="6" r="2" fill="#8fd0ff"/><path d="M3 14h13v3H3z" fill="#b0b0b0" stroke="#000" stroke-width=".8"/></svg>
<div class="abs tsep" style="left:197px"></div>
<svg class="abs" style="left:204px;top:1px" width="18" height="18"><path d="M1 6l8-2 7 3-8 2z" fill="#7fae7f" stroke="#4a6a4a" stroke-width=".8"/><path d="M3 11l6-2 8 4-7 1z" fill="#9a9a9a" stroke="#555" stroke-width=".8"/><path d="M12 5l4 6" stroke="#b0b0a0" stroke-width="1.500"/></svg>
<svg class="abs" style="left:228px;top:1px" width="18" height="18"><rect x="2.500" y="1.500" width="13" height="11" fill="#c8c8c8" stroke="#000"/><rect x="4" y="3" width="10" height="8" fill="#1c4ad8"/><path d="M3 13h13v3H3z" fill="#b0b0b0" stroke="#000" stroke-width=".8"/><path d="M2 3l14 13M16 3L2 16" stroke="#d01010" stroke-width="2.600"/></svg>
<svg class="abs" style="left:250px;top:1px" width="18" height="18"><rect x="4.500" y="1.500" width="12" height="11" fill="#c8c8c8" stroke="#000"/><rect x="6" y="3" width="9" height="8" fill="#1c4ad8"/><path d="M5 13h12v3H5z" fill="#b0b0b0" stroke="#000" stroke-width=".8"/><circle cx="6.500" cy="12" r="4.500" fill="#d01010" stroke="#700" stroke-width=".8"/><path d="M3.500 14.500l6-5" stroke="#fff" stroke-width="1.600"/></svg>
</div>
  <div class="abs" style="left:0;top:51px;width:632px;height:344px;border:1px solid #716f64;border-right-color:#f1efe2;border-bottom-color:#f1efe2;background:#fff"><div class="abs" style="left:0;top:0;right:0;bottom:0;border:1px solid #404040;border-right-color:#d4d0c8;border-bottom-color:#d4d0c8;overflow:hidden">
<div class="abs" id="tree" style="left:-2px;top:0;width:620px;height:338px;letter-spacing:-0.1px">
<div class="abs vdot" style="left:29px;top:18px;height:312px"></div>
<div class="abs hdot" style="left:15px;top:9px;width:6px"></div>
<div class="abs vdot" style="left:48px;top:34px;height:8px"></div><div class="abs hdot" style="left:48px;top:41px;width:11px"></div>
<div class="abs vdot" style="left:48px;top:258px;height:24px"></div><div class="abs hdot" style="left:48px;top:265px;width:11px"></div><div class="abs hdot" style="left:48px;top:281px;width:11px"></div>
<div class="abs hdot" style="left:34px;top:25px;width:6px"></div><div class="abs hdot" style="left:34px;top:57px;width:6px"></div><div class="abs hdot" style="left:34px;top:73px;width:6px"></div><div class="abs hdot" style="left:34px;top:89px;width:6px"></div><div class="abs hdot" style="left:34px;top:105px;width:6px"></div><div class="abs hdot" style="left:34px;top:121px;width:6px"></div><div class="abs hdot" style="left:34px;top:137px;width:6px"></div><div class="abs hdot" style="left:34px;top:153px;width:6px"></div><div class="abs hdot" style="left:34px;top:169px;width:6px"></div><div class="abs hdot" style="left:34px;top:185px;width:6px"></div><div class="abs hdot" style="left:34px;top:201px;width:6px"></div><div class="abs hdot" style="left:34px;top:217px;width:6px"></div><div class="abs hdot" style="left:34px;top:233px;width:6px"></div><div class="abs hdot" style="left:34px;top:249px;width:6px"></div><div class="abs hdot" style="left:34px;top:297px;width:6px"></div><div class="abs hdot" style="left:34px;top:313px;width:6px"></div><div class="abs hdot" style="left:34px;top:329px;width:6px"></div>
<svg class="abs" style="left:6px;top:5px" width="9" height="9"><rect x=".5" y=".5" width="8" height="8" fill="#fff" stroke="#808080"/><path d="M2 4.500h5" stroke="#000"/></svg>
<svg class="abs" style="left:21px;top:1px" width="16" height="16" viewBox="0 0 16 16"><rect x="3" y="1" width="10" height="8" fill="#d4d0c8" stroke="#000" stroke-width="1"/><rect x="5" y="3" width="6" height="4" fill="#0000d0"/><path d="M1 13l2-3h10l2 3z" fill="#d4d0c8" stroke="#000" stroke-width="1"/></svg>
<span class="abs" style="left:41px;top:3px;white-space:nowrap">CARL</span>
<svg class="abs" style="left:25px;top:21px" width="9" height="9"><rect x=".5" y=".5" width="8" height="8" fill="#fff" stroke="#808080"/><path d="M2 4.500h5" stroke="#000"/></svg>
<svg class="abs" style="left:40px;top:17px" width="16" height="16" viewBox="0 0 16 16"><path d="M10 9l5.500-2.500v5z" fill="#707070"/><path d="M3 5c0-4.500 8.500-4.500 8.500 0 0 2.500-4 2.800-4 5.500" stroke="#4a3e00" stroke-width="4.800" fill="none"/><path d="M3 5c0-4.500 8.500-4.500 8.500 0 0 2.500-4 2.800-4 5.500" stroke="#fff000" stroke-width="2.800" fill="none"/><circle cx="7.500" cy="13.700" r="2.200" fill="#4a3e00"/><circle cx="7.500" cy="13.700" r="1.300" fill="#fff000"/></svg>
<span class="abs" style="left:60px;top:19px;white-space:nowrap">Andre enheter</span>
<svg class="abs" style="left:59px;top:33px" width="16" height="16" viewBox="0 0 16 16"><path d="M2.500 5c0-4.500 8.500-4.500 8.500 0 0 2.500-4 2.800-4 5.500" stroke="#4a3e00" stroke-width="4.800" fill="none"/><path d="M2.500 5c0-4.500 8.500-4.500 8.500 0 0 2.500-4 2.800-4 5.500" stroke="#fff000" stroke-width="2.800" fill="none"/><circle cx="7" cy="13.700" r="2.200" fill="#4a3e00"/><circle cx="7" cy="13.700" r="1.300" fill="#fff000"/><circle cx="12" cy="11" r="4.500" fill="#fff200"/><rect x="11.300" y="8" width="1.600" height="4" fill="#000"/><rect x="11.300" y="13" width="1.600" height="1.500" fill="#000"/></svg>
<span class="abs" style="left:79px;top:35px;white-space:nowrap">Ukjent enhet</span>
<svg class="abs" style="left:25px;top:53px" width="9" height="9"><rect x=".5" y=".5" width="8" height="8" fill="#fff" stroke="#808080"/><path d="M2 4.500h5" stroke="#000"/><path d="M4.500 2v5" stroke="#000"/></svg>
<svg class="abs" style="left:40px;top:49px" width="16" height="16" viewBox="0 0 16 16"><rect x="4" y="1" width="10" height="9" rx="1" fill="#5fa8ee" stroke="#9fb8d8" stroke-width="1"/><rect x="5.500" y="2.500" width="7" height="6" fill="#2f7fe0"/><path d="M6 11h6l2 3.500H4z" fill="#c8d4e4" stroke="#8a9ab0" stroke-width=".8"/></svg>
<span class="abs" style="left:60px;top:51px;white-space:nowrap">Datamaskin</span>
<svg class="abs" style="left:25px;top:69px" width="9" height="9"><rect x=".5" y=".5" width="8" height="8" fill="#fff" stroke="#808080"/><path d="M2 4.500h5" stroke="#000"/><path d="M4.500 2v5" stroke="#000"/></svg>
<svg class="abs" style="left:40px;top:65px" width="16" height="16" viewBox="0 0 16 16"><rect x="1.500" y="3.500" width="13" height="5" rx="1" fill="#e8e8e8" stroke="#333" stroke-width="1"/><rect x="3.500" y="8.500" width="12" height="5" rx="1" fill="#e8e8e8" stroke="#333" stroke-width="1"/><rect x="5" y="10.500" width="7" height="1" fill="#666"/></svg>
<span class="abs" style="left:60px;top:67px;white-space:nowrap">Diskettkontrollere</span>
<svg class="abs" style="left:25px;top:85px" width="9" height="9"><rect x=".5" y=".5" width="8" height="8" fill="#fff" stroke="#808080"/><path d="M2 4.500h5" stroke="#000"/><path d="M4.500 2v5" stroke="#000"/></svg>
<svg class="abs" style="left:40px;top:81px" width="16" height="16" viewBox="0 0 16 16"><path d="M1 9l6-4h8l-5 5z" fill="#c8c8c8" stroke="#666" stroke-width=".8"/><path d="M1 9h9l5-4v2l-5 5H1z" fill="#a8a8a8" stroke="#666" stroke-width=".8"/></svg>
<span class="abs" style="left:60px;top:83px;white-space:nowrap">Diskstasjoner</span>
<svg class="abs" style="left:25px;top:101px" width="9" height="9"><rect x=".5" y=".5" width="8" height="8" fill="#fff" stroke="#808080"/><path d="M2 4.500h5" stroke="#000"/><path d="M4.500 2v5" stroke="#000"/></svg>
<svg class="abs" style="left:40px;top:97px" width="16" height="16" viewBox="0 0 16 16"><circle cx="8" cy="6.500" r="6" fill="#dcdce8" stroke="#8888a0" stroke-width="1"/><circle cx="8" cy="6.500" r="2" fill="#fff" stroke="#8888a0" stroke-width=".8"/><path d="M1 12h12l2 2v1.500H1z" fill="#c0c0c8" stroke="#707078" stroke-width=".8"/></svg>
<span class="abs" style="left:60px;top:99px;white-space:nowrap">DVD-/CD-ROM-stasjoner</span>
<svg class="abs" style="left:25px;top:117px" width="9" height="9"><rect x=".5" y=".5" width="8" height="8" fill="#fff" stroke="#808080"/><path d="M2 4.500h5" stroke="#000"/><path d="M4.500 2v5" stroke="#000"/></svg>
<svg class="abs" style="left:40px;top:113px" width="16" height="16" viewBox="0 0 16 16"><rect x="1.500" y="6.500" width="14" height="7" fill="#e8e8e8" stroke="#222" stroke-width="1"/><path d="M3 9h11M3 11h11" stroke="#444" stroke-width="1" stroke-dasharray="1 1"/><path d="M5 1h4v6H5z" fill="#fff" stroke="#222" stroke-width="1"/></svg>
<span class="abs" style="left:60px;top:115px;white-space:nowrap">Enheter for menneskelig grensesnitt</span>
<svg class="abs" style="left:25px;top:133px" width="9" height="9"><rect x=".5" y=".5" width="8" height="8" fill="#fff" stroke="#808080"/><path d="M2 4.500h5" stroke="#000"/><path d="M4.500 2v5" stroke="#000"/></svg>
<svg class="abs" style="left:40px;top:129px" width="16" height="16" viewBox="0 0 16 16"><rect x="1.500" y="3.500" width="13" height="5" rx="1" fill="#e8e8e8" stroke="#333" stroke-width="1"/><rect x="3.500" y="8.500" width="12" height="5" rx="1" fill="#e8e8e8" stroke="#333" stroke-width="1"/><rect x="5" y="10.500" width="7" height="1" fill="#666"/></svg>
<span class="abs" style="left:60px;top:131px;white-space:nowrap">IDE ATA/ATAPI-kontrollere</span>
<svg class="abs" style="left:25px;top:149px" width="9" height="9"><rect x=".5" y=".5" width="8" height="8" fill="#fff" stroke="#808080"/><path d="M2 4.500h5" stroke="#000"/><path d="M4.500 2v5" stroke="#000"/></svg>
<svg class="abs" style="left:40px;top:145px" width="16" height="16" viewBox="0 0 16 16"><circle cx="7" cy="7" r="6" fill="#8c8c8c" stroke="#444" stroke-width="1"/><circle cx="7" cy="7" r="3" fill="#ddd" stroke="#555" stroke-width=".8"/><path d="M11 11l3 4" stroke="#4a5ac8" stroke-width="2"/></svg>
<span class="abs" style="left:60px;top:147px;white-space:nowrap">Lyd-, video- og spillkontrollere</span>
<svg class="abs" style="left:25px;top:165px" width="9" height="9"><rect x=".5" y=".5" width="8" height="8" fill="#fff" stroke="#808080"/><path d="M2 4.500h5" stroke="#000"/><path d="M4.500 2v5" stroke="#000"/></svg>
<svg class="abs" style="left:40px;top:161px" width="16" height="16" viewBox="0 0 16 16"><ellipse cx="9" cy="9" rx="5" ry="6.500" fill="#f4f4f4" stroke="#9a9a9a" stroke-width="1" transform="rotate(-20 9 9)"/><path d="M3 1c2 0 3 1 4 3" stroke="#888" stroke-width="1" fill="none"/></svg>
<span class="abs" style="left:60px;top:163px;white-space:nowrap">Mus og andre pekeenheter</span>
<svg class="abs" style="left:25px;top:181px" width="9" height="9"><rect x=".5" y=".5" width="8" height="8" fill="#fff" stroke="#808080"/><path d="M2 4.500h5" stroke="#000"/><path d="M4.500 2v5" stroke="#000"/></svg>
<svg class="abs" style="left:40px;top:177px" width="16" height="16" viewBox="0 0 16 16"><rect x="1" y="4" width="13" height="8" fill="#1f9a1f" stroke="#0a500a" stroke-width="1"/><rect x="3" y="6" width="3" height="3" fill="#cfe8cf"/><rect x="8" y="6" width="4" height="3" fill="#222"/><path d="M2 12v2h9v-2" fill="#d8c040"/><rect x="13" y="3" width="2" height="11" fill="#aaa"/></svg>
<span class="abs" style="left:60px;top:179px;white-space:nowrap">Nettverkskort</span>
<svg class="abs" style="left:25px;top:197px" width="9" height="9"><rect x=".5" y=".5" width="8" height="8" fill="#fff" stroke="#808080"/><path d="M2 4.500h5" stroke="#000"/><path d="M4.500 2v5" stroke="#000"/></svg>
<svg class="abs" style="left:40px;top:193px" width="16" height="16" viewBox="0 0 16 16"><path d="M1 8l7-7 7 7-7 7z" fill="#fff" stroke="#000" stroke-width="1"/><path d="M3 8l5-5 5 5-5 5z" fill="#b8b8b8"/></svg>
<span class="abs" style="left:60px;top:195px;white-space:nowrap">NVIDIA Network Bus Enumerator</span>
<svg class="abs" style="left:25px;top:213px" width="9" height="9"><rect x=".5" y=".5" width="8" height="8" fill="#fff" stroke="#808080"/><path d="M2 4.500h5" stroke="#000"/><path d="M4.500 2v5" stroke="#000"/></svg>
<svg class="abs" style="left:40px;top:209px" width="16" height="16" viewBox="0 0 16 16"><path d="M1 7l6-4 8 3-6 5z" fill="#333" stroke="#000" stroke-width="1"/><path d="M1 7v2l8 4v-2zM9 11v2l6-5V6z" fill="#111"/><path d="M2 11l1 2M4 12l1 2M6 13l1 2M11 12l1 2M13 10l1 2" stroke="#222" stroke-width="1"/></svg>
<span class="abs" style="left:60px;top:211px;white-space:nowrap">Prosessorer</span>
<svg class="abs" style="left:25px;top:229px" width="9" height="9"><rect x=".5" y=".5" width="8" height="8" fill="#fff" stroke="#808080"/><path d="M2 4.500h5" stroke="#000"/><path d="M4.500 2v5" stroke="#000"/></svg>
<svg class="abs" style="left:40px;top:225px" width="16" height="16" viewBox="0 0 16 16"><rect x="3.500" y="1" width="10" height="8.500" rx="1" fill="#d8e6f6" stroke="#7a92b4" stroke-width="1"/><rect x="5" y="2.500" width="7" height="5.500" fill="#2f86e8"/><path d="M6 10.500h5l2 4H4z" fill="#c8d4e4" stroke="#8a9ab0" stroke-width=".8"/></svg>
<span class="abs" style="left:60px;top:227px;white-space:nowrap">Skjermer</span>
<svg class="abs" style="left:25px;top:245px" width="9" height="9"><rect x=".5" y=".5" width="8" height="8" fill="#fff" stroke="#808080"/><path d="M2 4.500h5" stroke="#000"/></svg>
<svg class="abs" style="left:40px;top:241px" width="16" height="16" viewBox="0 0 16 16"><rect x="3.500" y="1" width="10" height="8.500" rx="1" fill="#d8e6f6" stroke="#7a92b4" stroke-width="1"/><rect x="5" y="2.500" width="7" height="5.500" fill="#2f86e8"/><path d="M6 10.500h5l2 4H4z" fill="#c8d4e4" stroke="#8a9ab0" stroke-width=".8"/></svg>
<span class="abs" style="left:60px;top:243px;white-space:nowrap">Skjermkort</span>
<svg class="abs" style="left:59px;top:257px" width="16" height="16" viewBox="0 0 16 16"><rect x="3.500" y="1" width="10" height="8.500" rx="1" fill="#d8e6f6" stroke="#7a92b4" stroke-width="1"/><rect x="5" y="2.500" width="7" height="5.500" fill="#2f86e8"/><path d="M6 10.500h5l2 4H4z" fill="#c8d4e4" stroke="#8a9ab0" stroke-width=".8"/></svg>
<span class="abs" style="left:79px;top:259px;white-space:nowrap">Radeon X1900 GT</span>
<svg class="abs" style="left:59px;top:273px" width="16" height="16" viewBox="0 0 16 16"><rect x="3.500" y="1" width="10" height="8.500" rx="1" fill="#d8e6f6" stroke="#7a92b4" stroke-width="1"/><rect x="5" y="2.500" width="7" height="5.500" fill="#2f86e8"/><path d="M6 10.500h5l2 4H4z" fill="#c8d4e4" stroke="#8a9ab0" stroke-width=".8"/></svg>
<span class="abs" style="left:79px;top:275px;white-space:nowrap">Radeon X1900 GT Secondary</span>
<svg class="abs" style="left:25px;top:293px" width="9" height="9"><rect x=".5" y=".5" width="8" height="8" fill="#fff" stroke="#808080"/><path d="M2 4.500h5" stroke="#000"/><path d="M4.500 2v5" stroke="#000"/></svg>
<svg class="abs" style="left:40px;top:289px" width="16" height="16" viewBox="0 0 16 16"><rect x="4" y="1" width="10" height="9" rx="1" fill="#5fa8ee" stroke="#9fb8d8" stroke-width="1"/><rect x="5.500" y="2.500" width="7" height="6" fill="#2f7fe0"/><path d="M6 11h6l2 3.500H4z" fill="#c8d4e4" stroke="#8a9ab0" stroke-width=".8"/></svg>
<span class="abs" style="left:60px;top:291px;white-space:nowrap">Systemenheter</span>
<svg class="abs" style="left:25px;top:309px" width="9" height="9"><rect x=".5" y=".5" width="8" height="8" fill="#fff" stroke="#808080"/><path d="M2 4.500h5" stroke="#000"/><path d="M4.500 2v5" stroke="#000"/></svg>
<svg class="abs" style="left:40px;top:305px" width="16" height="16" viewBox="0 0 16 16"><path d="M1 9l5-4 9 3-4 5z" fill="#dcdce4" stroke="#8888a0" stroke-width="1"/><path d="M4 8l7 3M5 7l7 3" stroke="#9a9ab0" stroke-width=".8"/></svg>
<span class="abs" style="left:60px;top:307px;white-space:nowrap">Tastatur</span>
<svg class="abs" style="left:25px;top:325px" width="9" height="9"><rect x=".5" y=".5" width="8" height="8" fill="#fff" stroke="#808080"/><path d="M2 4.500h5" stroke="#000"/><path d="M4.500 2v5" stroke="#000"/></svg>
<svg class="abs" style="left:40px;top:321px" width="16" height="16" viewBox="0 0 16 16"><path d="M1 8h13M14 8l-3-2v4zM4 8l3-4h3M5 8l3 4h3" stroke="#000" stroke-width="1.300" fill="none"/><circle cx="2.500" cy="8" r="1.800" fill="#000"/><rect x="10" y="2.500" width="3" height="3" fill="#000"/><circle cx="11.500" cy="12" r="1.700" fill="#000"/></svg>
<span class="abs" style="left:60px;top:323px;white-space:nowrap">Universal seriell busskontroller</span>
  </div></div></div>
  <div class="abs" style="left:0;top:396px;width:632px;height:21px;border-top:1px solid #c5c2b8;box-shadow:inset 0 1px 0 #fff">
   <div class="abs ssep" style="left:410px"></div><div class="abs ssep" style="left:543px"></div><div class="abs ssep" style="left:627px"></div>
  </div>
 </div>
</div>

<div class="abs" id="task" style="left:0;top:994px;width:1280px;height:30px;background:linear-gradient(180deg,#1f2f86 0,#3165c4 3%,#3682e5 6%,#4490e6 10%,#3883e5 12%,#2b71e0 15%,#2663da 18%,#235bd6 20%,#2258d5 23%,#2157d6 38%,#245ddb 54%,#2562df 86%,#245fdc 89%,#2158d4 92%,#1d4ec0 95%,#1941a5 98%)">
 <div class="abs" id="start" style="left:0;top:0;width:98px;height:30px;border-radius:0 9px 9px 0 / 0 14px 14px 0;background:radial-gradient(ellipse at 20% 20%,#7cc47c 0,#3f9a3f 45%,#2f8a2f 100%);box-shadow:inset 0 2px 3px #8fd08f,inset -2px -3px 5px #1f6a1f,1px 0 2px rgba(0,0,60,.35)">
  <svg class="abs" style="left:11px;top:5px" width="20" height="19" viewBox="0 0 20 19"><path d="M2 3c3-2 5-1 7 0l-1.500 6c-2-1-4-2-7 0z" fill="#f25a2a"/><path d="M10.500 3.500c2 1 4 2 7 0l-1.500 6c-3 2-5 1-7 0z" fill="#7fc241"/><path d="M0 10.500c3-2 5-1 7 0l-1.500 6c-2-1-4-2-7 0z" fill="#3f8ce8" transform="translate(1.500 0)"/><path d="M8.500 11c2 1 4 2 7 0l-1.500 6c-3 2-5 1-7 0z" fill="#fbc734"/></svg>
  <span class="abs" style="left:35px;top:5px;font-size:18px;line-height:21px;font-weight:bold;font-style:italic;color:#fff;text-shadow:1px 2px 2px #1a4a1a;letter-spacing:-0.3px">Start</span>
 </div>
 <div class="abs tkb" style="left:108px;top:3px;width:160px;height:24px;background:linear-gradient(180deg,#5a9cf4 0,#3c82f0 15%,#3a80ef 80%,#3476e4 100%);box-shadow:inset 1px 1px 0 #6fb0ff,inset -1px -1px 0 #2a62c8">
  <svg class="abs" style="left:9px;top:5px" width="16" height="14"><rect x="1" y="1" width="14" height="12" fill="#fff" stroke="#6c8ad0" stroke-width="1"/><rect x="1" y="1" width="14" height="2.500" fill="#7a9ae8"/></svg>
  <span class="abs" style="left:29px;top:6px">Veiviser for funnet m...</span></div>
 <div class="abs tkb" style="left:269px;top:3px;width:160px;height:24px;background:#1e52b7;box-shadow:inset 1px 1px 1px #163f95,inset -1px -1px 0 #2f66d0">
  <svg class="abs" style="left:9px;top:4px" width="16" height="16" viewBox="0 0 16 16"><rect x="3" y="1" width="10" height="8" fill="#d4d0c8" stroke="#000" stroke-width="1"/><rect x="5" y="3" width="6" height="4" fill="#0000d0"/><path d="M1 13l2-3h10l2 3z" fill="#d4d0c8" stroke="#000" stroke-width="1"/></svg>
  <span class="abs" style="left:29px;top:6px">Enhetsbehandling</span></div>
 <span class="abs" style="left:1098px;top:9px;color:#fff">NO</span>
 <div class="abs" id="tray" style="left:1132px;top:0;width:148px;height:30px;background:linear-gradient(180deg,#0c5fcb 0,#17a0ee 4%,#18b4f8 10%,#16a5f0 16%,#1290e8 25%,#0f8cea 50%,#1195ee 80%,#1192ea 90%,#0d7ad4 96%,#095bb8 100%);border-left:1px solid #0a3a98;box-shadow:inset 1px 0 0 #3ac0ff">
  <div class="abs" style="left:-9px;top:6px;width:19px;height:19px;border-radius:50%;background:radial-gradient(circle at 40% 35%,#7ec0ff,#2878e8 60%,#1550c0);box-shadow:0 0 0 1px #e0f0ff inset"><svg width="19" height="19"><path d="M11 5.500L7 9.500l4 4" stroke="#fff" stroke-width="2" fill="none"/></svg></div>
  <svg class="abs" style="left:11px;top:7px" width="16" height="16"><rect y="1" width="16" height="12" fill="#e01818"/><text x="1" y="11" font-family="Liberation Sans, sans-serif" font-weight="bold" font-style="italic" font-size="10" fill="#fff" letter-spacing="-.5">ATi</text></svg>
  <svg class="abs" style="left:29px;top:7px" width="17" height="16"><path d="M1 5l8-2 7 3-8 2z" fill="#7fae7f" stroke="#4a6a4a" stroke-width=".8"/><path d="M2 11l6-2 8 4-7 1z" fill="#c8a050" stroke="#555" stroke-width=".8"/><path d="M11 4l4 6" stroke="#d0d0c0" stroke-width="1.500"/></svg>
  <svg class="abs" style="left:49px;top:6px" width="16" height="18"><rect x="7" y="0" width="1.500" height="5" fill="#400"/><rect x="2" y="5" width="11" height="7" fill="#e01010" stroke="#500" stroke-width=".8"/><rect x="1" y="13" width="14" height="4" fill="#333" stroke="#000" stroke-width=".6"/><rect x="3" y="14.500" width="6" height="1" fill="#bbb"/></svg>
  <svg class="abs" style="left:68px;top:6px" width="14" height="18"><rect x="1" y="1" width="9" height="15" rx="1" fill="#e8e8e0" stroke="#909088" stroke-width=".8"/><rect x="2.500" y="3" width="6" height="4" fill="#a0a8b0"/><circle cx="9" cy="13" r="3.500" fill="#4aa84a" stroke="#c0e0c0" stroke-width=".6"/></svg>
  <svg class="abs" style="left:84px;top:6px" width="18" height="18"><circle cx="9" cy="9" r="7" fill="#3aa8f0" stroke="#a8dcff" stroke-width="1.500"/><circle cx="9" cy="9" r="3.500" fill="#0a70d0"/><path d="M12 12l4 4" stroke="#a8dcff" stroke-width="2.500"/></svg>
  <span class="abs" style="left:106px;top:9px;color:#fff">14:25</span>
 </div>
</div>

</body>
</html>
